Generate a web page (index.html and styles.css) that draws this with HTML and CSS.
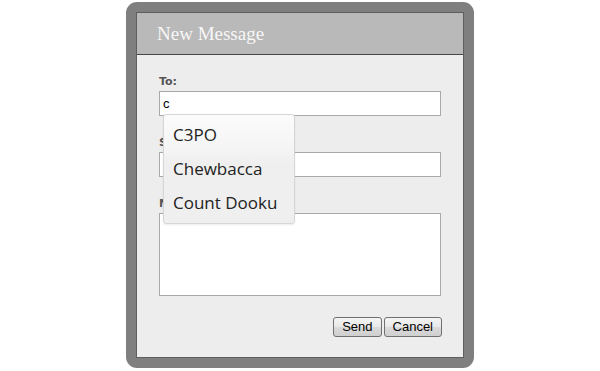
FILE: index.html
```html
<!DOCTYPE html>
<html>
<head>
<meta charset="utf-8">
<link rel="stylesheet" href="styles.css">
</head>
<body>
<div class="frame">
  <div class="panel">
    <div class="header">New Message</div>
    <form class="body">
      <div class="field to-field">
        <label class="label">To:</label>
        <div class="input">c</div>
        <ul class="suggest">
          <li>C3PO</li>
          <li>Chewbacca</li>
          <li>Count Dooku</li>
        </ul>
      </div>
      <div class="field">
        <label class="label">Subject:</label>
        <div class="input"></div>
      </div>
      <div class="field last">
        <label class="label">Message:</label>
        <div class="textarea"></div>
      </div>
      <div class="actions">
        <button type="button" class="btn">Send</button>
        <button type="button" class="btn">Cancel</button>
      </div>
    </form>
  </div>
</div>
</body>
</html>
```
FILE: styles.css
```css
html, body {
  margin: 0;
  padding: 0;
  background: #ffffff;
}
.frame {
  width: 328px;
  margin: 2px auto 0;
  border: 10px solid #7f7f7f;
  border-radius: 11px;
  background: #7f7f7f;
}
.panel {
  border: 1px solid #5e5e5e;
  background: #ededed;
}
.header {
  height: 41px;
  line-height: 41px;
  padding-left: 20px;
  background: #b9b9b9;
  border-bottom: 1px solid #444444;
  color: #f7f7f7;
  font-family: "Liberation Serif", serif;
  font-size: 19px;
}
.body {
  margin: 0;
  padding: 20px 22px 20px;
}
.field {
  margin-bottom: 20px;
}
.field.last {
  margin-bottom: 0;
}
.to-field {
  position: relative;
}
.label {
  display: block;
  height: 13px;
  line-height: 13px;
  margin-bottom: 3px;
  font-family: "DejaVu Sans", sans-serif;
  font-weight: bold;
  font-size: 11px;
  color: #555555;
}
.input {
  box-sizing: border-box;
  height: 25px;
  border: 1px solid #a9a9a9;
  background: #ffffff;
  padding-left: 3px;
  font-family: "Liberation Sans", sans-serif;
  font-size: 13px;
  line-height: 23px;
  color: #000;
}
.textarea {
  box-sizing: border-box;
  height: 83px;
  border: 1px solid #a9a9a9;
  background: #ffffff;
}
.suggest {
  position: absolute;
  left: 4px;
  top: 39px;
  width: 130px;
  margin: 0;
  padding: 3px 0;
  list-style: none;
  border: 1px solid #d6d6d6;
  border-radius: 3px;
  background: linear-gradient(#fbfbfb 0%, #f5f5f5 30%, #efefef 45%, #efefef 100%);
  box-shadow: 0 1px 2px rgba(0, 0, 0, 0.08);
}
.suggest li {
  height: 34px;
  line-height: 34px;
  padding-left: 9px;
  font-family: "Open Sans", sans-serif;
  font-weight: 500;
  font-size: 17px;
  color: #222222;
}
.actions {
  display: flex;
  justify-content: flex-end;
  gap: 2px;
  margin-top: 21px;
  margin-right: -1px;
}
.btn {
  box-sizing: border-box;
  height: 20px;
  margin: 0;
  padding: 0 8px;
  border: 1px solid #707070;
  border-radius: 3px;
  background: linear-gradient(#f4f4f4 0%, #e8e8e8 50%, #dadada 51%, #cfcfcf 100%);
  font-family: "Liberation Sans", sans-serif;
  font-size: 13px;
  color: #000;
  line-height: 18px;
}
```
